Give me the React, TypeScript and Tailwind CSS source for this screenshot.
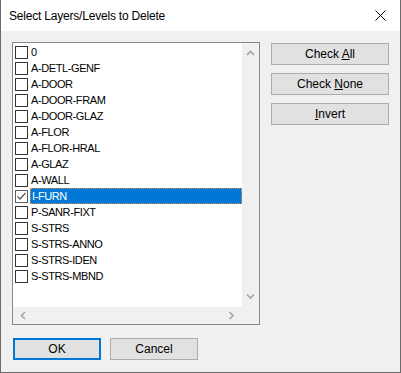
import React, { useState } from 'react';

const layers = [
  '0',
  'A-DETL-GENF',
  'A-DOOR',
  'A-DOOR-FRAM',
  'A-DOOR-GLAZ',
  'A-FLOR',
  'A-FLOR-HRAL',
  'A-GLAZ',
  'A-WALL',
  'I-FURN',
  'P-SANR-FIXT',
  'S-STRS',
  'S-STRS-ANNO',
  'S-STRS-IDEN',
  'S-STRS-MBND',
];

const Chevron: React.FC<{ dir: 'up' | 'down' | 'left' | 'right' }> = ({ dir }) => {
  const pts = {
    up: '1,5 4.5,1.5 8,5',
    down: '1,1.5 4.5,5 8,1.5',
    left: '5,1 1.5,4.5 5,8',
    right: '1.5,1 5,4.5 1.5,8',
  }[dir];
  const vertical = dir === 'up' || dir === 'down';
  return (
    <svg width={vertical ? 9 : 7} height={vertical ? 7 : 9} viewBox={vertical ? '0 0 9 7' : '0 0 7 9'}>
      <polyline points={pts} fill="none" stroke="#a6a6a6" strokeWidth="1.6" />
    </svg>
  );
};

const DlgButton: React.FC<{ children: React.ReactNode; className?: string }> = ({ children, className }) => (
  <button className={`h-[22px] bg-[#e1e1e1] border border-[#adadad] text-[12px] text-black leading-none ${className ?? ''}`}>
    {children}
  </button>
);

const App: React.FC = () => {
  const [checked, setChecked] = useState<Record<string, boolean>>({ 'I-FURN': true });
  const [selected, setSelected] = useState('I-FURN');

  return (
    <div
      className="w-[401px] h-[373px] bg-[#f0f0f0] border-x border-b border-[#6b6b6b] flex flex-col select-none"
      style={{ fontFamily: '"Liberation Sans", Arial, sans-serif' }}
    >
      {/* Title bar */}
      <div className="h-[31px] bg-white flex items-center justify-between pl-[8px] pr-[10px] shrink-0">
        <span className="text-[12px] text-black tracking-[-0.2px]">Select Layers/Levels to Delete</span>
        <svg width="11" height="11" viewBox="0 0 11 11" className="mr-[4px]">
          <path d="M0.5 0.5 L10.5 10.5 M10.5 0.5 L0.5 10.5" stroke="#000" strokeWidth="1" />
        </svg>
      </div>

      <div className="flex-1 flex flex-col pl-[11px] pr-[11px] pt-[11px]">
        <div className="flex gap-[11px]">
          {/* List box */}
          <div className="w-[248px] h-[283px] border border-[#828790] grid grid-cols-[1fr_17px] grid-rows-[1fr_17px]">
            <div className="bg-white rounded-br-[2px] overflow-hidden pt-[1px]">
              {layers.map((name) => {
                const isSel = selected === name;
                const isChk = !!checked[name];
                return (
                  <div key={name} className="h-[16px] flex items-center" onClick={() => setSelected(name)}>
                    <div
                      className={`ml-[2px] w-[13px] h-[13px] border bg-white flex items-center justify-center shrink-0 ${
                        isChk ? 'border-[#606060]' : 'border-[#333333]'
                      }`}
                      onClick={() => setChecked({ ...checked, [name]: !isChk })}
                    >
                      {isChk && (
                        <svg width="11" height="11" viewBox="0 0 11 11">
                          <polyline points="1.5,5.5 4,8 9.5,2" fill="none" stroke="#5a5a5a" strokeWidth="1.3" />
                        </svg>
                      )}
                    </div>
                    <div
                      className={`ml-[2px] flex-1 h-[16px] flex items-center pl-[1px] text-[11px] tracking-[-0.4px] ${
                        isSel ? 'bg-[#0078d7] text-white border border-dotted border-[#e8934a] pl-0' : 'text-black'
                      }`}
                    >
                      {name}
                    </div>
                  </div>
                );
              })}
            </div>
            <div className="bg-[#f0f0f0] flex flex-col items-center justify-between py-[7px]">
              <Chevron dir="up" />
              <Chevron dir="down" />
            </div>
            <div className="bg-[#f0f0f0] flex items-center justify-between px-[7px]">
              <Chevron dir="left" />
              <Chevron dir="right" />
            </div>
            <div className="bg-[#f0f0f0]" />
          </div>

          {/* Side buttons */}
          <div className="flex flex-col gap-[8px] w-[118px] pt-[1px]">
            <DlgButton>
              Check <span className="underline">A</span>ll
            </DlgButton>
            <DlgButton>
              Check <span className="underline">N</span>one
            </DlgButton>
            <DlgButton>
              <span className="underline">I</span>nvert
            </DlgButton>
          </div>
        </div>

        {/* Bottom buttons */}
        <div className="flex gap-[9px] mt-[13px] ml-[1px]">
          <button className="w-[88px] h-[22px] bg-[#e1e1e1] border-2 border-[#0078d7] text-[12px] text-black leading-none">
            OK
          </button>
          <DlgButton className="w-[88px]">Cancel</DlgButton>
        </div>
      </div>
    </div>
  );
};

export default App;
